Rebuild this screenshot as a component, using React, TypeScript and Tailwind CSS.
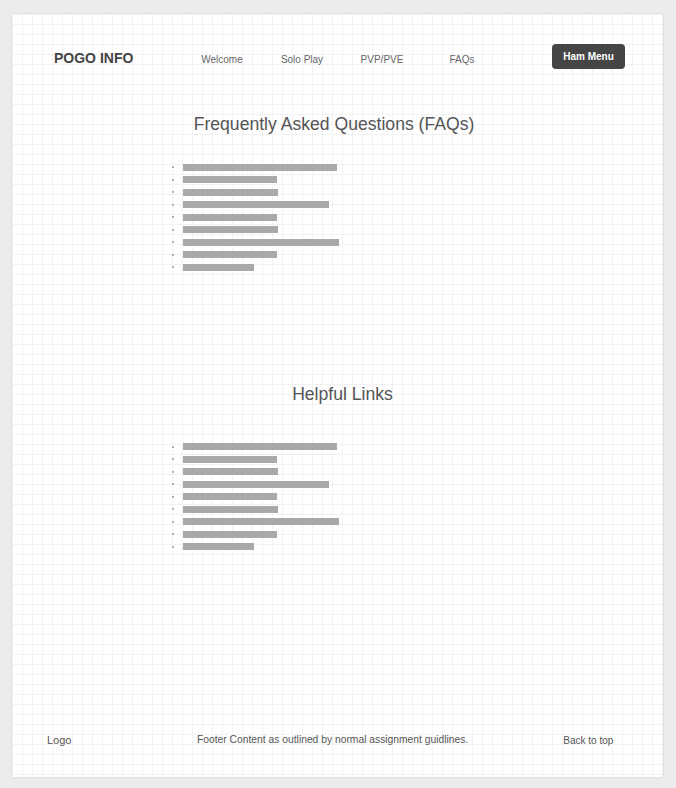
const bars = [154, 94, 95, 146, 94, 95, 156, 94, 71];

function PlaceholderList() {
  return (
    <ul className="pl-[160px]">
      {bars.map((w, i) => (
        <li key={i} className="flex h-[12.5px] items-center">
          <span className="h-[2px] w-[2px] rounded-full bg-[#9a9a9a]" />
          <span className="ml-[9px] h-[7px] bg-[#a9a9a9]" style={{ width: w }} />
        </li>
      ))}
    </ul>
  );
}

export default function App() {
  const font = "font-['Liberation_Sans',Arial,sans-serif]";
  return (
    <div className={`min-h-[788px] bg-[#ececec] pt-[14px] pl-[12px] ${font}`}>
      <div className="flex h-[763px] w-[651px] flex-col bg-white bg-[linear-gradient(to_right,#f2f2f2_1px,transparent_1px),linear-gradient(to_bottom,#f2f2f2_1px,transparent_1px)] bg-[size:10px_10px] shadow-[0_0_2px_rgba(0,0,0,0.12)]">

        {/* Header */}
        <header className="mt-[30px] flex h-[25px] items-center pl-[42px] pr-[38px]">
          <div className="mt-[3px] w-[128px] text-[14px] font-bold text-[#444]">POGO INFO</div>
          <nav className="mt-[5px] flex text-[10px] text-[#666]">
            <a className="w-20 text-center">Welcome</a>
            <a className="w-20 text-center">Solo Play</a>
            <a className="w-20 text-center">PVP/PVE</a>
            <a className="w-20 text-center">FAQs</a>
          </nav>
          <button className="ml-auto h-[25px] w-[73px] rounded-[4px] bg-[#454545] text-[10px] font-bold text-white">
            Ham Menu
          </button>
        </header>

        {/* FAQs */}
        <h2 className="mt-[45px] h-[20px] pr-[7px] text-center text-[17.6px] leading-[20px] text-[#555]">
          Frequently Asked Questions (FAQs)
        </h2>
        <div className="mt-[27px]">
          <PlaceholderList />
        </div>

        {/* Links */}
        <h2 className="mt-[110px] h-[20px] pl-[10px] text-center text-[17.6px] leading-[20px] text-[#555]">
          Helpful Links
        </h2>
        <div className="mt-[37px]">
          <PlaceholderList />
        </div>

        {/* Footer */}
        <footer className="mt-auto mb-[30px] flex h-[14px] items-center pl-[35px] text-[#555]">
          <span className="w-[150px] text-[11px]">Logo</span>
          <span className="text-[10.3px]">Footer Content as outlined by normal assignment guidlines.</span>
          <span className="ml-[95px] text-[10px]">Back to top</span>
        </footer>
      </div>
    </div>
  );
}
